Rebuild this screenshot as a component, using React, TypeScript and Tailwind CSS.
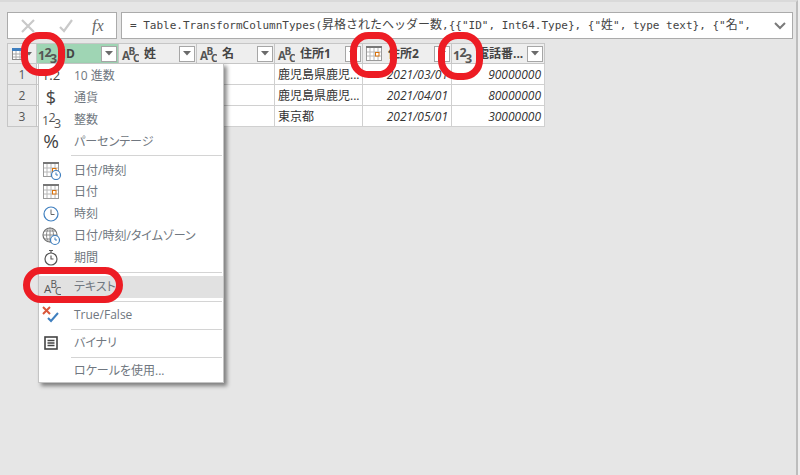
import React from "react";

const UI = `"Open Sans","Noto Sans CJK JP",sans-serif`;

function Num123() {
  return (
    <svg width="19" height="24" viewBox="0 -2 19 24" className="-my-[2px] shrink-0">
      <g fill="#555" fontFamily="Open Sans, sans-serif" fontSize="12.5">
        <text x="0" y="16">1</text>
        <text x="6.5" y="12.5">2</text>
        <text x="12" y="18.5">3</text>
      </g>
    </svg>
  );
}

function Abc() {
  return (
    <svg width="19" height="24" viewBox="0 -2 19 24" className="-my-[2px] shrink-0">
      <g fill="#555" fontFamily="Open Sans, sans-serif">
        <text x="2" y="16" fontSize="11.5">A</text>
        <text x="8.5" y="11" fontSize="10">B</text>
        <text x="13" y="18" fontSize="10.5">C</text>
      </g>
    </svg>
  );
}

function Cal({ clock = false }: { clock?: boolean }) {
  return (
    <svg width="24" height="20" viewBox="0 0 24 20" className="shrink-0">
      <rect x="2.5" y="2.5" width="15" height="14" fill="#fff" stroke="#9a9a9a" />
      <rect x="2" y="2" width="16" height="2" fill="#777" />
      <path d="M6 4v12M10 4v12M14 4v12M3 8h14M3 12h14" stroke="#b8b8b8" />
      <rect x="11.5" y="8.5" width="3.5" height="3.5" fill="#fff" stroke="#d9730d" />
      {clock && (
        <>
          <circle cx="15" cy="15" r="4.5" fill="#fff" stroke="#3f7fbf" strokeWidth="1.2" />
          <path d="M15 12.5V15h2" fill="none" stroke="#3f7fbf" />
        </>
      )}
    </svg>
  );
}

function ColDrop() {
  return (
    <span className="ml-auto mr-[1px] flex h-[16px] w-[16px] shrink-0 items-center justify-center border border-[#a6a6a6] bg-white">
      <svg width="8" height="5" viewBox="0 0 8 5">
        <path d="M0 0h8L4 4.5z" fill="#6b6b6b" />
      </svg>
    </span>
  );
}

function Header({ icon, label, active }: { icon: React.ReactNode; label: string; active?: boolean }) {
  return (
    <div
      className={`flex h-[21px] items-center border-r border-b border-t border-[#c6c6c6] pl-[1px] text-[12px] font-bold text-[#444] ${
        active ? "bg-[#9fd5b4]" : "bg-[#eeeeee]"
      }`}
    >
      {icon}
      <span className="whitespace-nowrap">{label}</span>
      <ColDrop />
    </div>
  );
}

function Td({ children, right }: { children?: React.ReactNode; right?: boolean }) {
  return (
    <div
      className={`flex h-[21px] items-center overflow-hidden whitespace-nowrap border-r border-b border-[#d0d0d0] bg-white px-[3px] pt-[1px] text-[12px] text-[#333] ${
        right ? "justify-end italic" : ""
      }`}
    >
      {children}
    </div>
  );
}

function Rh({ n }: { n: number }) {
  return (
    <div className="flex h-[21px] items-center justify-center border-x border-b border-[#c6c6c6] bg-[#e9e9e9] pt-[1px] text-[12px] text-[#555]">
      {n}
    </div>
  );
}

function MenuRow({ icon, label, hi, low }: { icon?: React.ReactNode; label: string; hi?: boolean; low?: boolean }) {
  return (
    <div className={`flex h-[22px] items-center text-[12px] text-[#707780] [font-feature-settings:"palt"] ${hi ? "bg-[#e1e1e1]" : ""}`}>
      <span className="flex h-full w-[24px] shrink-0 items-center justify-center">{icon}</span>
      <span className={`ml-[11px] whitespace-nowrap ${low ? "pt-[2px]" : ""}`}>{label}</span>
    </div>
  );
}

function Sep({ h = "h-[6px]" }: { h?: string }) {
  return (
    <div className={`flex ${h} items-center pl-[32px] pr-px`}>
      <div className="h-px w-full bg-[#d4d4d4]" />
    </div>
  );
}

const Glyph = ({ children, size = "text-[18px]" }: { children: React.ReactNode; size?: string }) => (
  <span className={`${size} leading-none text-[#444]`}>{children}</span>
);

const Cjk = ({ children }: { children: React.ReactNode }) => <span className="text-[12px]">{children}</span>;

export default function App() {
  return (
    <div className="h-[475px] w-[800px] overflow-hidden bg-[#eeeeee]" style={{ fontFamily: UI }}>
      <div className="relative h-[475px] w-[798px] border-t-2 border-r-2 border-t-[#dadada] border-r-[#bdbdbd] bg-[#e6e6e6] pl-[7px] pt-[10px]">
        {/* formula bar */}
        <div className="flex gap-[4px] pr-[3px]">
          <div className="flex h-[27px] w-[110px] items-center border border-[#ababab] bg-white pl-[12px]">
            <svg width="16" height="16" viewBox="0 0 16 16" className="shrink-0">
              <path d="M2 2l12 12M14 2L2 14" stroke="#c9c9c9" strokeWidth="2.2" fill="none" />
            </svg>
            <svg width="16" height="16" viewBox="0 0 16 16" className="ml-[22px] shrink-0">
              <path d="M2 9l4 4 8-11" stroke="#c9c9c9" strokeWidth="2.2" fill="none" />
            </svg>
            <span className="ml-[18px] text-[16px] italic leading-none text-[#666]" style={{ fontFamily: `"Liberation Serif",serif` }}>
              fx
            </span>
          </div>
          <div className="flex h-[27px] flex-1 items-center border border-[#ababab] bg-white pl-[8px] pr-[6px]">
            <span className="whitespace-nowrap text-[11px] text-[#444]" style={{ fontFamily: `"DejaVu Sans Mono","Noto Sans CJK JP",monospace` }}>
              = Table.TransformColumnTypes(<Cjk>昇格されたヘッダー数</Cjk>,{"{{"}"ID", Int64.Type{"}"}, {"{"}"<Cjk>姓</Cjk>", type text{"}"}, {"{"}"<Cjk>名</Cjk>",
            </span>
            <svg width="12" height="8" viewBox="0 0 12 8" className="ml-auto shrink-0">
              <path d="M1 1l5 5 5-5" fill="none" stroke="#7a7a7a" strokeWidth="2" />
            </svg>
          </div>
        </div>

        {/* table */}
        <div className="mt-[4px] grid w-[538px] grid-cols-[30px_82px_78px_78px_88px_89px_93px]">
          <div className="flex h-[21px] items-center gap-[2px] border border-[#c6c6c6] bg-[#eeeeee] pl-[4px]">
            <svg width="12" height="12" viewBox="0 0 12 12">
              <rect x="0.5" y="0.5" width="11" height="11" fill="#fff" stroke="#8a8a8a" />
              <rect x="0" y="0" width="12" height="3" fill="#3f7fbf" />
              <path d="M4 3v8M8 3v8M1 6h10M1 9h10" stroke="#a8a8a8" />
            </svg>
            <svg width="6" height="4" viewBox="0 0 6 4">
              <path d="M0 0h6L3 3.5z" fill="#666" />
            </svg>
          </div>
          <Header icon={<span className="mr-[5px] flex"><Num123 /></span>} label="ID" active />
          <Header icon={<span className="mr-[5px] flex"><Abc /></span>} label="姓" />
          <Header icon={<span className="mr-[5px] flex"><Abc /></span>} label="名" />
          <Header icon={<span className="mr-[5px] flex"><Abc /></span>} label="住所1" />
          <Header icon={<Cal />} label="住所2" />
          <Header icon={<span className="mr-[5px] flex"><Num123 /></span>} label="電話番..." />

          <Rh n={1} /><Td /><Td /><Td /><Td>鹿児島県鹿児...</Td><Td right>2021/03/01</Td><Td right>90000000</Td>
          <Rh n={2} /><Td /><Td /><Td /><Td>鹿児島県鹿児...</Td><Td right>2021/04/01</Td><Td right>80000000</Td>
          <Rh n={3} /><Td /><Td /><Td /><Td>東京都</Td><Td right>2021/05/01</Td><Td right>30000000</Td>
        </div>

        {/* type menu */}
        <div className="absolute left-[38px] top-[61px] w-[186px] border border-[#c4c4c4] bg-white shadow-[3px_3px_4px_rgba(0,0,0,0.45)]">
          <MenuRow low label="10 進数" icon={<Glyph size="text-[13px]">1.2</Glyph>} />
          <MenuRow low label="通貨" icon={<Glyph>$</Glyph>} />
          <MenuRow low label="整数" icon={<Num123 />} />
          <MenuRow low label="パーセンテージ" icon={<Glyph size="text-[19px]">%</Glyph>} />
          <Sep h="h-[7px]" />
          <MenuRow low label="日付/時刻" icon={<span className="flex pl-[4px]"><Cal clock /></span>} />
          <MenuRow label="日付" icon={<span className="flex pl-[4px]"><Cal /></span>} />
          <MenuRow
            label="時刻"
            icon={
              <svg width="18" height="18" viewBox="0 0 18 18">
                <circle cx="9" cy="9" r="7" fill="#fff" stroke="#3f7fbf" strokeWidth="1.2" />
                <path d="M9 4.5V9.5h3.5" fill="none" stroke="#666" />
              </svg>
            }
          />
          <MenuRow
            label="日付/時刻/タイムゾーン"
            icon={
              <svg width="20" height="20" viewBox="0 0 20 20">
                <circle cx="9" cy="9" r="7" fill="#fff" stroke="#6e6e6e" strokeWidth="1.2" />
                <path d="M2 9h14M9 2v14M4 5h10M4 13h10" stroke="#8a8a8a" fill="none" />
                <ellipse cx="9" cy="9" rx="3.5" ry="7" fill="none" stroke="#8a8a8a" />
                <circle cx="14" cy="14" r="4.5" fill="#fff" stroke="#3f7fbf" strokeWidth="1.2" />
                <path d="M14 11.5V14h2" fill="none" stroke="#3f7fbf" />
              </svg>
            }
          />
          <MenuRow
            label="期間"
            icon={
              <svg width="16" height="18" viewBox="0 0 16 18">
                <circle cx="8" cy="10" r="6" fill="#fff" stroke="#555" strokeWidth="1.2" />
                <path d="M6 1.5h4M8 1.5V4M8 6.5V10h2.5" fill="none" stroke="#555" strokeWidth="1.1" />
              </svg>
            }
          />
          <Sep h="h-[7px]" />
          <MenuRow label="テキスト" icon={<Abc />} hi />
          <Sep />
          <MenuRow
            label="True/False"
            icon={
              <svg width="20" height="20" viewBox="0 0 20 20">
                <path d="M2 2l7 7M9 2L2 9" stroke="#d9573a" strokeWidth="2" fill="none" />
                <path d="M7 13l3 3 7-8" stroke="#3f7fbf" strokeWidth="2" fill="none" />
              </svg>
            }
          />
          <Sep />
          <MenuRow
            label="バイナリ"
            icon={
              <svg width="14" height="14" viewBox="0 0 14 14">
                <rect x="1" y="1" width="12" height="12" fill="#fff" stroke="#444" strokeWidth="1.6" />
                <path d="M3.5 4.5h7M3.5 7h7M3.5 9.5h7" stroke="#444" strokeWidth="1.3" />
              </svg>
            }
          />
          <Sep />
          <MenuRow label="ロケールを使用..." />
        </div>

        {/* red annotations */}
        <svg className="pointer-events-none absolute left-0 -top-[2px]" width="798" height="475" viewBox="0 0 798 475">
          <g fill="none" stroke="#ed1c24" strokeWidth="7">
            <rect x="24.5" y="35.5" width="37" height="37" rx="15" />
            <rect x="353.5" y="35.5" width="40" height="39" rx="15" />
            <rect x="441.5" y="35.5" width="38" height="41" rx="16" />
            <rect x="26.5" y="270.5" width="93" height="29" rx="14.5" />
          </g>
        </svg>
      </div>
    </div>
  );
}
